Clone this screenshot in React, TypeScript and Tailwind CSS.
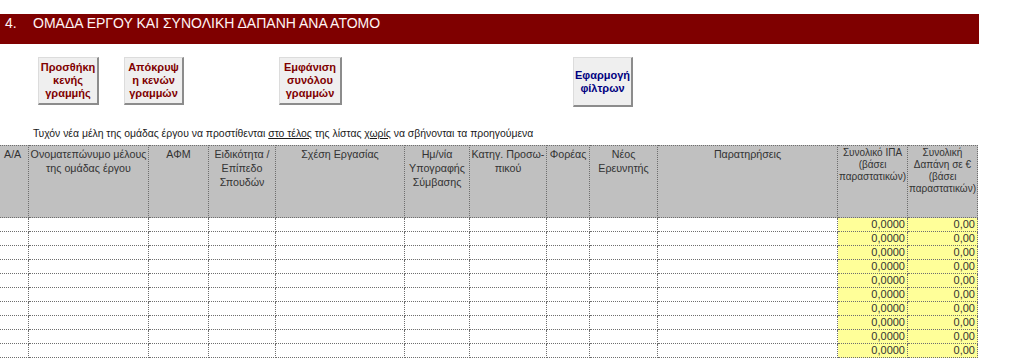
import React from 'react';

const cols = 'grid-cols-[29px_120px_60px_67px_129px_65px_77px_43px_68px_180px_70px_70px]';

const headers: { lines: string[]; small?: boolean; left?: boolean }[] = [
  { lines: ['A/A'], left: true },
  { lines: ['Ονοματεπώνυμο μέλους', 'της ομάδας έργου'] },
  { lines: ['ΑΦΜ'] },
  { lines: ['Ειδικότητα /', 'Επίπεδο', 'Σπουδών'] },
  { lines: ['Σχέση Εργασίας'] },
  { lines: ['Ημ/νία', 'Υπογραφής', 'Σύμβασης'] },
  { lines: ['Κατηγ. Προσω-', 'πικού'] },
  { lines: ['Φορέας'] },
  { lines: ['Νέος', 'Ερευνητής'] },
  { lines: ['Παρατηρήσεις'] },
  { lines: ['Συνολικό ΙΠΑ', '(βάσει', 'παραστατικών)'], small: true },
  { lines: ['Συνολική', 'Δαπάνη σε €', '(βάσει', 'παραστατικών)'], small: true },
];

const rows = Array.from({ length: 10 }, (_, i) => i);

const ActionButton: React.FC<{ lines: string[]; className: string; blue?: boolean }> = ({ lines, className, blue }) => (
  <div
    className={`flex flex-col items-center justify-center bg-[#efefef] border-t border-l border-[#dcdcdc] border-r-2 border-b-2 border-r-[#8c8c8c] border-b-[#8c8c8c] text-[11px] font-bold leading-[13px] ${blue ? 'text-[#000080]' : 'text-[#800000]'} ${className}`}
  >
    {lines.map((l) => (
      <span key={l} className="whitespace-nowrap">{l}</span>
    ))}
  </div>
);

export default function App() {
  return (
    <div className="h-[358px] w-[1024px] overflow-hidden bg-white" style={{ fontFamily: '"Liberation Sans", Arial, sans-serif' }}>
      {/* section title bar */}
      <div className="mt-[14px] flex h-[30px] w-[979px] bg-[#7f0000] text-[14px] leading-[18px] text-[#fff4f4]">
        <span className="ml-[5px] w-[28px]">4.</span>
        <span>ΟΜΑΔΑ ΕΡΓΟΥ ΚΑΙ ΣΥΝΟΛΙΚΗ ΔΑΠΑΝΗ ΑΝΑ ΑΤΟΜΟ</span>
      </div>

      {/* buttons */}
      <div className="mt-[13px] flex h-[50px] items-start">
        <ActionButton lines={['Προσθήκη', 'κενής', 'γραμμής']} className="ml-[38px] h-[48px] w-[61px]" />
        <ActionButton lines={['Απόκρυψ', 'η κενών', 'γραμμών']} className="ml-[25px] h-[48px] w-[60px]" />
        <ActionButton lines={['Εμφάνιση', 'συνόλου', 'γραμμών']} className="ml-[95px] h-[48px] w-[63px]" />
        <ActionButton lines={['Εφαρμογή', 'φίλτρων']} className="ml-[231px] h-[50px] w-[60px]" blue />
      </div>

      {/* note */}
      <div className="mt-[20px] h-[13px] pl-[33px] text-[10.4px] leading-[13px] text-[#1a1a1a] whitespace-nowrap">
        Τυχόν νέα μέλη της ομάδας έργου να προστίθενται <span className="underline">στο τέλος</span> της λίστας{' '}
        <span className="underline">χωρίς</span> να σβήνονται τα προηγούμενα
      </div>

      {/* table */}
      <div className={`mt-[5px] grid w-[978px] ${cols}`}>
        {headers.map((h, i) => (
          <div
            key={i}
            className={`h-[73px] border-t border-r border-b border-dotted border-[#6e6e6e] bg-[#c0c0c0] pt-[1px] text-[#333] ${h.left ? 'pl-[4px] text-left' : 'text-center'} ${h.small ? 'text-[10px] leading-[12px]' : 'text-[10.7px] leading-[14px]'}`}
          >
            {h.lines.map((l) => (
              <div key={l} className="whitespace-nowrap">{l}</div>
            ))}
          </div>
        ))}
        {rows.map((r) =>
          headers.map((_, i) => (
            <div
              key={`${r}-${i}`}
              className={`h-[14px] border-r border-b border-dotted border-[#6e6e6e] pr-[2px] text-right text-[11px] leading-[13px] text-[#333] ${i >= 10 ? 'bg-[#ffff99]' : 'bg-white'}`}
            >
              {i === 10 ? '0,0000' : i === 11 ? '0,00' : ''}
            </div>
          ))
        )}
      </div>
    </div>
  );
}
